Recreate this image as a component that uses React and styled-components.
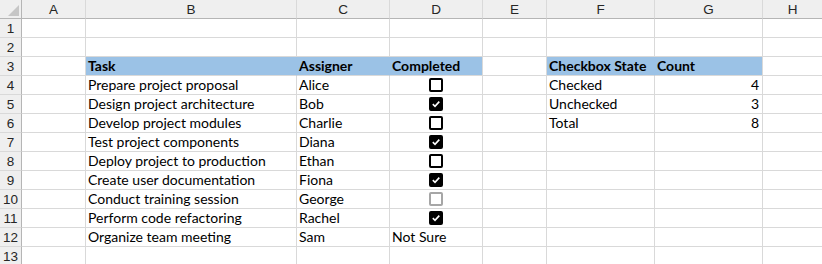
import React from "react";
import styled, { createGlobalStyle } from "styled-components";

const Global = createGlobalStyle`
  html, body { margin: 0; padding: 0; background: #ffffff; }
  body { font-family: Lato, "Liberation Sans", sans-serif; }
`;

const GRID = "#d9d9d9";
const HEAD_BORDER = "#b5b5b5";
const BLUE = "#9bc2e6";

const Sheet = styled.div`
  display: grid;
  grid-template-columns: 22px 64px 211px 93px 93px 64px 108px 108px 60px;
  grid-auto-rows: 19px;
  width: 822px;
  overflow: hidden;
  font-size: 14px;
  color: #000;
`;

const Corner = styled.div`
  position: relative;
  background: #efefef;
  border-right: 1px solid ${HEAD_BORDER};
  border-bottom: 1px solid ${HEAD_BORDER};
  &::after {
    content: "";
    position: absolute;
    right: 2px;
    bottom: 2px;
    width: 0;
    height: 0;
    border-left: 11px solid transparent;
    border-bottom: 11px solid #c6c6c6;
  }
`;

const ColHead = styled.div`
  background: #efefef;
  border-right: 1px solid ${GRID};
  border-bottom: 1px solid ${HEAD_BORDER};
  display: flex;
  align-items: center;
  justify-content: center;
  font-family: "Liberation Sans", sans-serif;
  font-size: 13.5px;
  color: #262626;
  box-sizing: border-box;
`;

const RowHead = styled.div`
  background: #efefef;
  border-right: 1px solid ${HEAD_BORDER};
  border-bottom: 1px solid ${GRID};
  display: flex;
  align-items: center;
  justify-content: center;
  font-family: "Liberation Sans", sans-serif;
  font-size: 13.5px;
  color: #262626;
  box-sizing: border-box;
`;

const Cell = styled.div`
  box-sizing: border-box;
  background: ${(p) => (p.$fill ? BLUE : "#ffffff")};
  border-right: 1px solid ${(p) => (p.$fill && !p.$edge ? BLUE : GRID)};
  border-bottom: 1px solid ${GRID};
  display: flex;
  align-items: flex-end;
  justify-content: ${(p) =>
    p.$align === "right" ? "flex-end" : p.$align === "center" ? "center" : "flex-start"};
  padding: 0 3px 1px 2px;
  font-weight: ${(p) => (p.$bold ? 700 : 400)};
  white-space: nowrap;
  line-height: 17px;
`;

const CheckCell = styled(Cell)`
  align-items: center;
  justify-content: center;
  padding: 0 0 0 0;
`;

const Box = styled.span`
  box-sizing: border-box;
  width: 14px;
  height: 14px;
  border-radius: 2px;
  border: 2px solid ${(p) => (p.$state === "disabled" ? "#a6a6a6" : "#000")};
  background: ${(p) => (p.$state === "checked" ? "#000" : "#fff")};
  display: inline-flex;
  align-items: center;
  justify-content: center;
`;

const Checkbox = ({ state }) => (
  <Box $state={state}>
    {state === "checked" && (
      <svg width="10" height="10" viewBox="0 0 10 10">
        <path d="M1.8 5.2 L4 7.3 L8.3 2.6" fill="none" stroke="#fff" strokeWidth="1.6" />
      </svg>
    )}
  </Box>
);

const cols = ["A", "B", "C", "D", "E", "F", "G", "H"];

const tasks = [
  ["Prepare project proposal", "Alice", "unchecked"],
  ["Design project architecture", "Bob", "checked"],
  ["Develop project modules", "Charlie", "unchecked"],
  ["Test project components", "Diana", "checked"],
  ["Deploy project to production", "Ethan", "unchecked"],
  ["Create user documentation", "Fiona", "checked"],
  ["Conduct training session", "George", "disabled"],
  ["Perform code refactoring", "Rachel", "checked"],
  ["Organize team meeting", "Sam", "text:Not Sure"],
];

const summary = [
  ["Checked", "4"],
  ["Unchecked", "3"],
  ["Total", "8"],
];

export default function App() {
  const rows = [];
  for (let r = 1; r <= 2; r++) {
    rows.push(
      <React.Fragment key={r}>
        <RowHead>{r}</RowHead>
        {cols.map((c) => (
          <Cell key={c} />
        ))}
      </React.Fragment>
    );
  }
  rows.push(
    <React.Fragment key={3}>
      <RowHead>3</RowHead>
      <Cell />
      <Cell $fill $bold>Task</Cell>
      <Cell $fill $bold>Assigner</Cell>
      <Cell $fill $bold $edge>Completed</Cell>
      <Cell />
      <Cell $fill $bold>Checkbox State</Cell>
      <Cell $fill $bold $edge>Count</Cell>
      <Cell />
    </React.Fragment>
  );
  for (let i = 0; i < 10; i++) {
    const r = i + 4;
    const t = tasks[i];
    const s = summary[i];
    rows.push(
      <React.Fragment key={r}>
        <RowHead>{r}</RowHead>
        <Cell />
        <Cell>{t ? t[0] : ""}</Cell>
        <Cell>{t ? t[1] : ""}</Cell>
        {t && !t[2].startsWith("text:") ? (
          <CheckCell>
            <Checkbox state={t[2]} />
          </CheckCell>
        ) : (
          <Cell>{t ? t[2].slice(5) : ""}</Cell>
        )}
        <Cell />
        <Cell>{s ? s[0] : ""}</Cell>
        <Cell $align="right">{s ? s[1] : ""}</Cell>
        <Cell />
      </React.Fragment>
    );
  }

  return (
    <>
      <Global />
      <Sheet>
        <Corner />
        {cols.map((c) => (
          <ColHead key={c}>{c}</ColHead>
        ))}
        {rows}
      </Sheet>
    </>
  );
}
